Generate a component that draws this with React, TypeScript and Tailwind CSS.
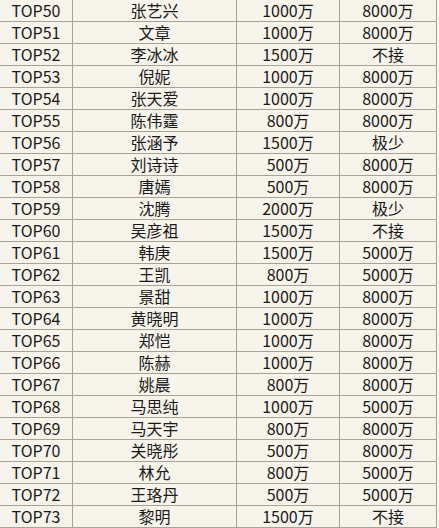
import React from "react";

const rows: [string, string, string, string][] = [
  ["TOP50", "张艺兴", "1000万", "8000万"],
  ["TOP51", "文章", "1000万", "8000万"],
  ["TOP52", "李冰冰", "1500万", "不接"],
  ["TOP53", "倪妮", "1000万", "8000万"],
  ["TOP54", "张天爱", "1000万", "8000万"],
  ["TOP55", "陈伟霆", "800万", "8000万"],
  ["TOP56", "张涵予", "1500万", "极少"],
  ["TOP57", "刘诗诗", "500万", "8000万"],
  ["TOP58", "唐嫣", "500万", "8000万"],
  ["TOP59", "沈腾", "2000万", "极少"],
  ["TOP60", "吴彦祖", "1500万", "不接"],
  ["TOP61", "韩庚", "1500万", "5000万"],
  ["TOP62", "王凯", "800万", "5000万"],
  ["TOP63", "景甜", "1000万", "8000万"],
  ["TOP64", "黄晓明", "1000万", "8000万"],
  ["TOP65", "郑恺", "1000万", "8000万"],
  ["TOP66", "陈赫", "1000万", "8000万"],
  ["TOP67", "姚晨", "800万", "8000万"],
  ["TOP68", "马思纯", "1000万", "5000万"],
  ["TOP69", "马天宇", "800万", "8000万"],
  ["TOP70", "关晓彤", "500万", "8000万"],
  ["TOP71", "林允", "800万", "5000万"],
  ["TOP72", "王珞丹", "500万", "5000万"],
  ["TOP73", "黎明", "1500万", "不接"],
];

export default function App() {
  return (
    <div className="w-[439px] h-[528px] overflow-hidden bg-[#f7f4ec] text-[#1a1a1a] text-[16px] leading-[21px] font-['Noto_Sans_CJK_SC',sans-serif]">
      <div className="grid grid-cols-[73px_164px_103px_97px]">
        {rows.map((r) => (
          <React.Fragment key={r[0]}>
            <div className="h-[22px] border-r border-b border-[#a7a294] text-center">
              {r[0]}
            </div>
            <div className="h-[22px] border-r border-b border-[#a7a294] text-center">
              {r[1]}
            </div>
            <div className="h-[22px] border-r border-b border-[#a7a294] text-center">
              {r[2]}
            </div>
            <div className="h-[22px] border-r border-b border-[#a7a294] text-center">
              {r[3]}
            </div>
          </React.Fragment>
        ))}
      </div>
    </div>
  );
}
